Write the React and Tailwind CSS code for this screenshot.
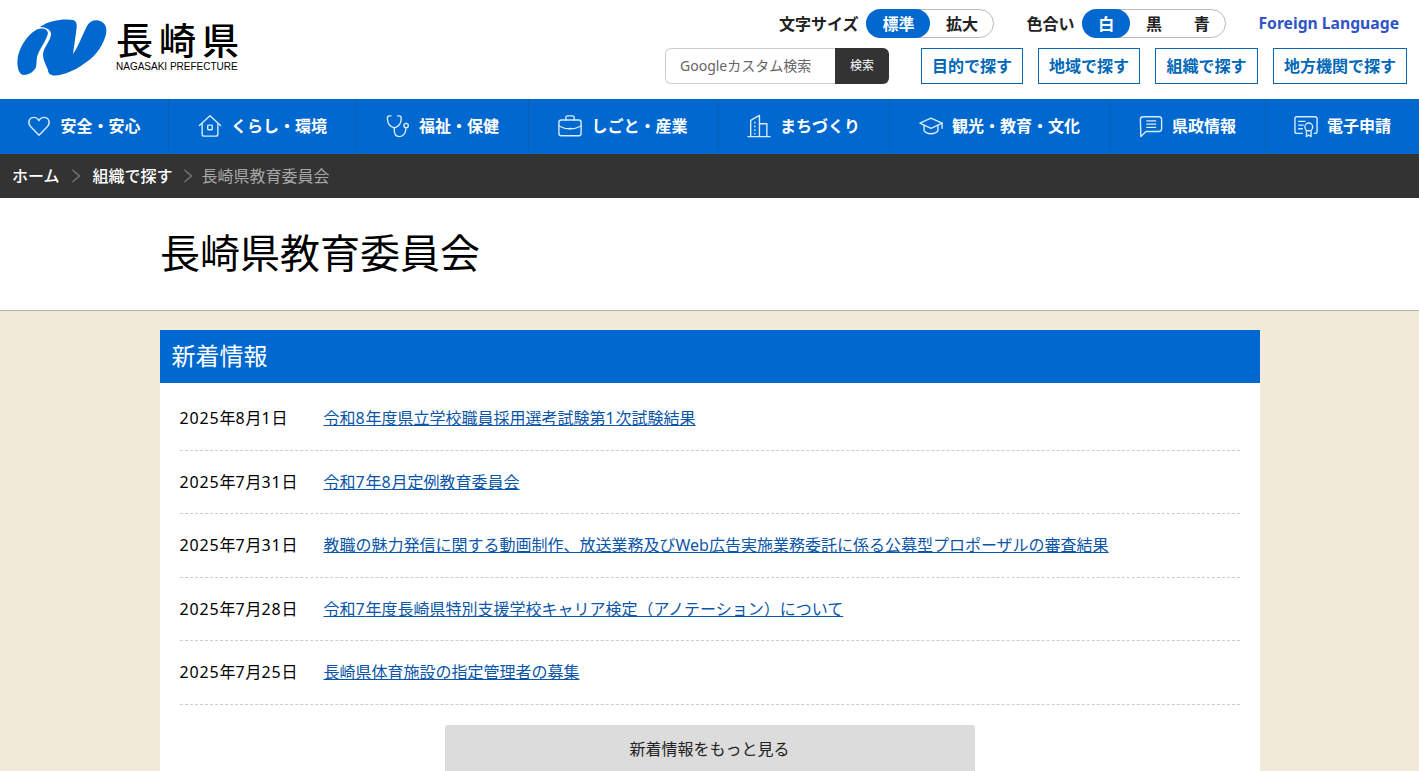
const navItems = [
  { label: "安全・安心", icon: "heart", width: "w-[169px]" },
  { label: "くらし・環境", icon: "home", width: "w-[188px]" },
  { label: "福祉・保健", icon: "stethoscope", width: "w-[172px]" },
  { label: "しごと・産業", icon: "briefcase", width: "w-[189px]" },
  { label: "まちづくり", icon: "building", width: "w-[172px]" },
  { label: "観光・教育・文化", icon: "graduation", width: "w-[220px]" },
  { label: "県政情報", icon: "chat", width: "w-[156px]" },
  { label: "電子申請", icon: "certificate", width: "w-[153px]" },
];

const searchLinks = [
  { label: "目的で探す", width: "w-[102px]" },
  { label: "地域で探す", width: "w-[102px]" },
  { label: "組織で探す", width: "w-[103px]" },
  { label: "地方機関で探す", width: "w-[134px]" },
];

const news = [
  { date: "2025年8月1日", title: "令和8年度県立学校職員採用選考試験第1次試験結果" },
  { date: "2025年7月31日", title: "令和7年8月定例教育委員会" },
  {
    date: "2025年7月31日",
    title: "教職の魅力発信に関する動画制作、放送業務及びWeb広告実施業務委託に係る公募型プロポーザルの審査結果",
  },
  { date: "2025年7月28日", title: "令和7年度長崎県特別支援学校キャリア検定（アノテーション）について" },
  { date: "2025年7月25日", title: "長崎県体育施設の指定管理者の募集" },
];

// digits run a little wider than the font gives
const WideDigits = ({ text }) =>
  text.split(/(\d+)/).map((part, i) =>
    /\d/.test(part) ? (
      <span key={i} className="tracking-[0.85px]">
        {part}
      </span>
    ) : (
      part
    )
  );

const NavIcon = ({ name }) => {
  const common = {
    fill: "none",
    stroke: "#d8ecff",
    strokeWidth: 1.5,
    strokeLinecap: "round",
    strokeLinejoin: "round",
    viewBox: "0 0 26 26",
    className: "w-[24px] h-[24px] shrink-0",
  };
  if (name === "heart")
    return (
      <svg {...common}>
        <path d="M13 23 L3.6 13.2 C0.4 9.6 2.2 3.6 7.4 3.6 C10 3.6 12 5.2 13 7.2 C14 5.2 16 3.6 18.6 3.6 C23.8 3.6 25.6 9.6 22.4 13.2 Z" />
      </svg>
    );
  if (name === "home")
    return (
      <svg {...common}>
        <path d="M1.5 12.5 L13 1.8 L24.5 12.5" />
        <path d="M4.5 10.5 V22 Q4.5 24 6.5 24 H19.5 Q21.5 24 21.5 22 V10.5" />
        <rect x="10.5" y="12" width="5" height="5" rx="0.8" />
      </svg>
    );
  if (name === "stethoscope")
    return (
      <svg {...common}>
        <path d="M5.5 2 H3.5 Q1.5 2 1.5 4.5 C1.5 10 3.5 13.5 9 15 C14.5 13.5 16.5 10 16.5 4.5 Q16.5 2 14.5 2 H12.5" />
        <path d="M9 15 V18 C9 22 11 24.5 14.5 24.5 C18.5 24.5 21.5 21 21.5 16" />
        <circle cx="21.8" cy="12.5" r="2.4" />
      </svg>
    );
  if (name === "briefcase")
    return (
      <svg {...common}>
        <rect x="1" y="6.5" width="24" height="17" rx="2.5" />
        <path d="M8.5 6.5 V3.5 Q8.5 2 10 2 H16 Q17.5 2 17.5 3.5 V6.5" />
        <path d="M1 13 C8 17 18 17 25 13" />
        <path d="M13 15.4 V16.2" />
      </svg>
    );
  if (name === "building")
    return (
      <svg {...common}>
        <path d="M1 24.5 H25" />
        <path d="M4 24.5 V7 L13.5 1.5 V24.5" />
        <path d="M13.5 10.5 H21.5 V24.5" />
        <path d="M8.5 9 V9.8 M8.5 13 V13.8 M8.5 17 V17.8 M8.5 21 V21.8" />
      </svg>
    );
  if (name === "graduation")
    return (
      <svg {...common}>
        <path d="M13 4.5 L25 10 L13 15.5 L1 10 Z" />
        <path d="M5.5 12.5 V18 C8 22.5 18 22.5 20.5 18 V12.5" />
        <path d="M25 10 V15.5" />
      </svg>
    );
  if (name === "chat")
    return (
      <svg {...common}>
        <path d="M4.5 3 H21.5 Q24.5 3 24.5 6 V16 Q24.5 19 21.5 19 H7.5 L2 24.5 L1.5 6 Q1.5 3 4.5 3 Z" />
        <path d="M8.5 7.5 H18 M8.5 11 H18 M8.5 14.5 H18" />
      </svg>
    );
  return (
    <svg {...common}>
      <path d="M9 21 H3 Q1 21 1 19 V5 Q1 3 3 3 H23 Q25 3 25 5 V19 Q25 21 23 21 H22" />
      <path d="M5 8 H12 M5 12 H10 M5 16 H9" />
      <circle cx="16" cy="14" r="4.2" />
      <path d="M13.5 18 V24.5 L16 22.8 L18.5 24.5 V18" />
    </svg>
  );
};

const Logo = () => (
  <svg viewBox="0 0 90 57" className="w-[90px] h-[57px] shrink-0">
    <path
      fill="#0068cf"
      d="M0.5 41 C1 30 10 16 19 11 C24 8.5 30 9 31 14 C30 20 24 28 21 35 C19 40 20 44 19 48 C17 53 11 56 7 56 C2 56 0 49 0.5 41 Z"
    />
    <path
      fill="#0068cf"
      d="M23 8 C32 1 48 -0.5 56 1 C60 2 60 6 59.5 10 L56 35 C60 30 66 15 70 7 C73 1 80 0 85 3 C89 5 90 10 89 15 C87 24 80 37 68 44 C58 52 46 56 38 56.5 C33 56.5 31 54 31 51 C29 46 26 41 26 36 C26 28 34 22 34 15 C34 11 29 8 23 8 Z"
    />
  </svg>
);

export default function App() {
  return (
    <div className="h-screen overflow-hidden bg-white text-black font-['Noto_Sans','Noto_Sans_CJK_JP',sans-serif]">
      <header className="h-[99px] flex justify-between pl-[17px] pr-3">
        <div className="flex items-start pt-[19px] gap-[9px]">
          <Logo />
          <div className="flex flex-col items-start">
            <span className="text-[37px] leading-[38px] font-medium tracking-[6px] mt-[3px]">長崎県</span>
            <span className="text-[10px] leading-[12px] mt-[1px] font-['Liberation_Sans',sans-serif] whitespace-nowrap">
              NAGASAKI PREFECTURE
            </span>
          </div>
        </div>
        <div className="flex flex-col items-end pt-[9px]">
          <div className="flex items-center h-[29px] pr-2 text-[16px] font-bold text-[#222]">
            <span className="mr-2">文字サイズ</span>
            <div className="flex w-[128px] h-[29px] rounded-full border border-[#bbb]">
              <span className="w-[64px] -my-px -ml-px rounded-full h-[29px] bg-[#0068cf] text-white flex items-center justify-center">標準</span>
              <span className="flex-1 flex items-center justify-center">拡大</span>
            </div>
            <span className="ml-8 mr-2">色合い</span>
            <div className="flex w-[144px] h-[29px] rounded-full border border-[#bbb]">
              <span className="w-[48px] -my-px -ml-px rounded-full h-[29px] bg-[#0068cf] text-white flex items-center justify-center">白</span>
              <span className="w-[48px] flex items-center justify-center">黒</span>
              <span className="w-[48px] flex items-center justify-center">青</span>
            </div>
            <span className="ml-8 text-[#2f55c7] text-[15.7px]">Foreign Language</span>
          </div>
          <div className="flex items-center mt-[10px]">
            <div className="flex w-[224px] h-9 mr-8">
              <div className="w-[170px] border border-[#ccc] border-r-0 rounded-l-md pl-[14px] flex items-center text-sm text-[#666] whitespace-nowrap">
                Googleカスタム検索
              </div>
              <button className="flex-1 bg-[#333] text-white text-xs rounded-r-md">検索</button>
            </div>
            <div className="flex gap-[15px]">
              {searchLinks.map((link) => (
                <a
                  key={link.label}
                  className={`${link.width} h-9 border border-[#0a66b5] text-[#0068b7] text-[16px] font-bold flex items-center justify-center whitespace-nowrap`}
                >
                  {link.label}
                </a>
              ))}
            </div>
          </div>
        </div>
      </header>

      <nav className="flex h-[55px] bg-[#0068cf]">
        {navItems.map((item) => (
          <a
            key={item.label}
            className={`${item.width} flex items-center justify-center gap-[9px] pb-[2px] border-r border-[#0a5fb4] last:border-r-0 text-white text-[16px] font-bold whitespace-nowrap`}
          >
            <NavIcon name={item.icon} />
            {item.label}
          </a>
        ))}
      </nav>

      <div className="flex items-center h-[44px] bg-[#333] pl-3 text-[16px] text-white">
        <span className="font-medium">ホーム</span>
        <svg viewBox="0 0 10 14" fill="none" stroke="#777" strokeWidth="1.4" className="w-[10px] h-[14px] ml-[11px] mr-[12px]">
          <path d="M1.5 1 L8.5 7 L1.5 13" />
        </svg>
        <span className="font-medium">組織で探す</span>
        <svg viewBox="0 0 10 14" fill="none" stroke="#777" strokeWidth="1.4" className="w-[10px] h-[14px] ml-[10px] mr-[9px]">
          <path d="M1.5 1 L8.5 7 L1.5 13" />
        </svg>
        <span className="text-[#a8a8a8]">長崎県教育委員会</span>
      </div>

      <div className="h-[113px] border-b border-[#b5b0a5] flex items-center pb-[2px]">
        <h1 className="ml-[160px] text-[40px] leading-none">長崎県教育委員会</h1>
      </div>

      <main className="bg-[#f1ead9] h-full pt-[19px]">
        <section className="w-[1100px] mx-auto bg-white">
          <h2 className="h-[53px] bg-[#0068cf] text-white text-[24px] flex items-center pl-[12px] pb-[2px]">新着情報</h2>
          <ul className="px-5 pt-[4.4px]">
            {news.map((row) => (
              <li key={row.title + row.date} className="flex items-center h-[63.5px] pb-[0.6px] border-b border-dashed border-[#ccc] text-[16px]">
                <span className="w-[144px] shrink-0">
                  <WideDigits text={row.date} />
                </span>
                <a className="text-[#0a55a8] underline">
                  <WideDigits text={row.title} />
                </a>
              </li>
            ))}
          </ul>
          <a className="w-[530px] h-[48px] mx-auto mt-5 bg-[#dcdcdc] rounded-[3px] flex items-center justify-center text-[16px] text-[#222]">
            新着情報をもっと見る
          </a>
        </section>
      </main>
    </div>
  );
}
